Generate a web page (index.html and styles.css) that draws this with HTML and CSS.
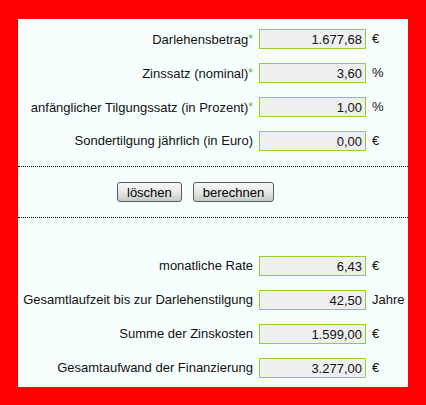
FILE: index.html
```html
<!DOCTYPE html>
<html lang="de">
<head>
<meta charset="utf-8">
<title>Darlehensrechner</title>
<link rel="stylesheet" href="styles.css">
</head>
<body>
<div class="panel">
  <div class="fields inputs">
    <label class="label">Darlehensbetrag<span class="req">*</span></label>
    <input class="field" type="text" value="1.677,68">
    <span class="unit">€</span>

    <label class="label">Zinssatz (nominal)<span class="req">*</span></label>
    <input class="field" type="text" value="3,60">
    <span class="unit">%</span>

    <label class="label">anfänglicher Tilgungssatz (in Prozent)<span class="req">*</span></label>
    <input class="field" type="text" value="1,00">
    <span class="unit">%</span>

    <label class="label">Sondertilgung jährlich (in Euro)</label>
    <input class="field" type="text" value="0,00">
    <span class="unit">€</span>
  </div>

  <div class="actions">
    <button class="btn" type="button">löschen</button>
    <button class="btn" type="button">berechnen</button>
  </div>

  <div class="fields results">
    <label class="label">monatliche Rate</label>
    <input class="field" type="text" value="6,43" readonly>
    <span class="unit">€</span>

    <label class="label">Gesamtlaufzeit bis zur Darlehenstilgung</label>
    <input class="field" type="text" value="42,50" readonly>
    <span class="unit">Jahre</span>

    <label class="label">Summe der Zinskosten</label>
    <input class="field" type="text" value="1.599,00" readonly>
    <span class="unit">€</span>

    <label class="label">Gesamtaufwand der Finanzierung</label>
    <input class="field" type="text" value="3.277,00" readonly>
    <span class="unit">€</span>
  </div>
</div>
</body>
</html>
```
FILE: styles.css
```css
html, body {
  margin: 0;
  background: #ff0000;
}

body {
  padding: 19px 18px 18px 18px;
  font-family: "Liberation Sans", Arial, sans-serif;
  font-size: 13px;
  color: #000;
}

.panel {
  width: 390px;
  height: 368px;
  background: #f7fefe;
  box-sizing: border-box;
}

.fields {
  display: grid;
  grid-template-columns: 235px 107px auto;
  grid-auto-rows: 20px;
  row-gap: 14px;
  column-gap: 6px;
  align-items: center;
}

.inputs {
  padding-top: 10px;
  padding-bottom: 15px;
  border-bottom: 1px dotted #000;
}

.results {
  padding-top: 38px;
}

.label {
  text-align: right;
  white-space: nowrap;
  line-height: 20px;
  color: #111;
}

/* required-field marker */
.req {
  color: #5cb82a;
  font-size: 12px;
  vertical-align: 1px;
}

.field {
  box-sizing: border-box;
  width: 107px;
  height: 20px;
  margin: 0;
  padding: 0 3px 0 2px;
  border: 1px solid #99cc33;
  background: #eef0ef;
  font: inherit;
  color: #111;
  text-align: right;
  outline: none;
}

.unit {
  line-height: 20px;
  color: #111;
}

.actions {
  display: flex;
  gap: 11px;
  padding: 15px 0 15px 99px;
  border-bottom: 1px dotted #000;
}

.btn {
  box-sizing: border-box;
  height: 20px;
  padding: 0 9px;
  border: 1px solid #5a5f5c;
  border-radius: 3px;
  background: linear-gradient(#f6f7f6, #e9ebea 45%, #c6cbc8);
  font: inherit;
  color: #000;
  line-height: 17px;
}
```
